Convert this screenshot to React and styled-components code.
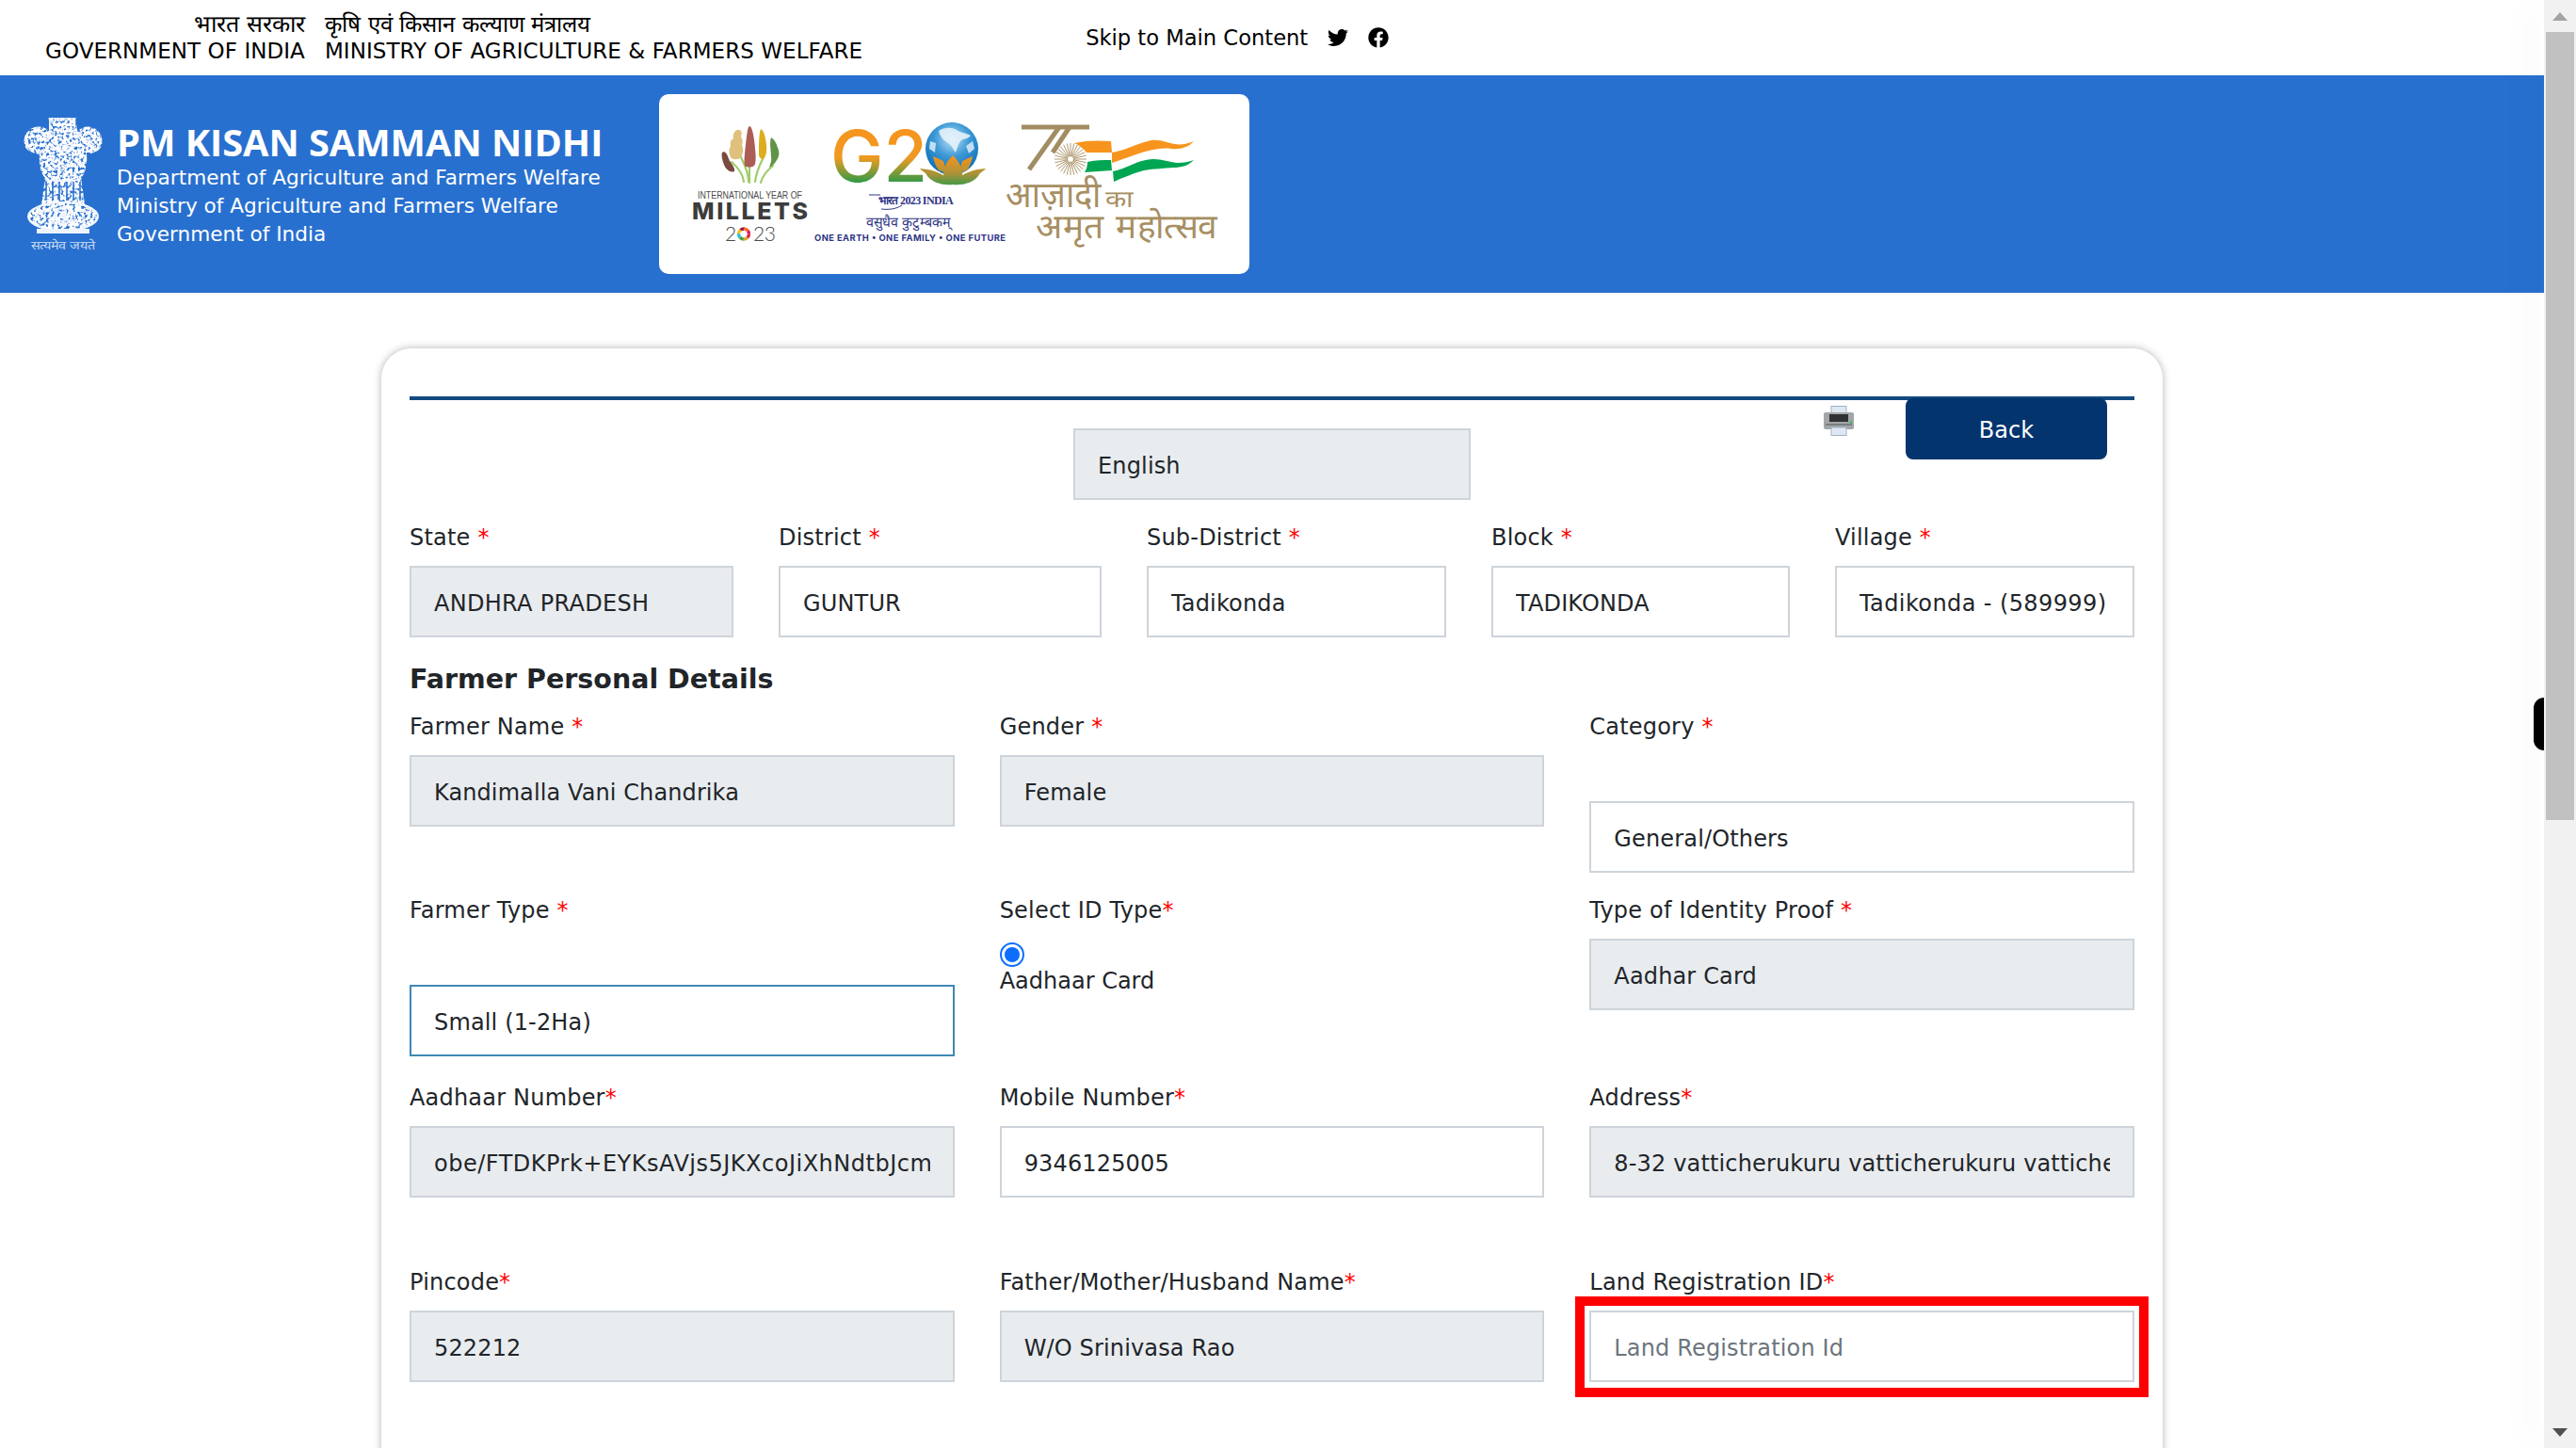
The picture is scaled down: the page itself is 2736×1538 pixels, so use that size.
import React from "react";
import styled, { createGlobalStyle } from "styled-components";
import { FaTwitter, FaFacebook } from "react-icons/fa";

const GlobalStyle = createGlobalStyle`
  html, body { margin: 0; padding: 0; background: #fff; overflow: hidden; }
  body { font-family: "DejaVu Sans", Verdana, sans-serif; color: #212529; }
  * { box-sizing: border-box; }
`;

const Page = styled.div`
  display: flex;
  width: 2736px;
  height: 1538px;
  overflow: hidden;
`;

const Main = styled.div`
  position: relative;
  width: 2702px;
  height: 1538px;
  overflow: hidden;
`;

const TopBar = styled.div`
  height: 80px;
  display: flex;
  align-items: center;
  padding-left: 48px;
  color: #000;
  font-size: 23px;
`;

const GovCol = styled.div`
  display: flex;
  flex-direction: column;
  align-items: ${(p) => (p.$right ? "flex-end" : "flex-start")};
  line-height: 28px;
  margin-right: 21px;
  white-space: nowrap;
  letter-spacing: 0.06px;
`;

const Hindi = styled.span`
  font-size: ${(p) => p.$size}px;
  font-weight: 400;
  letter-spacing: 0;
`;

const SkipRow = styled.div`
  display: flex;
  align-items: center;
  margin-left: 216px;
  gap: 21px;
  font-size: 22.6px;
  svg { font-size: 22px; color: #000; }
`;

const Banner = styled.div`
  height: 231px;
  background: #2870cf;
  display: flex;
  align-items: center;
  padding-left: 24px;
`;

const Emblem = styled.svg`
  width: 86px;
  height: 143px;
  flex: none;
  margin: 2px 14px 0 0;
`;

const BannerText = styled.div`
  width: 576px;
  color: #fff;
`;

const Title = styled.div`
  font-family: "Open Sans", sans-serif;
  font-weight: 700;
  font-size: 39.7px;
  line-height: 46px;
`;

const SubTitle = styled.div`
  font-size: 21.6px;
  line-height: 30px;
`;

const LogoCard = styled.div`
  width: 627px;
  height: 191px;
  background: #fff;
  border-radius: 10px;
  svg { display: block; }
`;

const Card = styled.div`
  margin: 59px 0 0 405px;
  width: 1892px;
  height: 1400px;
  padding: 51px 30px 0;
  border-radius: 32px 32px 0 0;
  box-shadow: 0 0 8px rgba(0, 0, 0, 0.3);
`;

const Rule = styled.div`
  height: 4px;
  background: #134a80;
`;

const Toolbar = styled.div`
  display: grid;
  grid-template-columns: 1fr 422px 1fr;
  margin-top: -2px;
`;

const ToolActions = styled.div`
  display: flex;
  justify-content: flex-end;
  align-items: flex-start;
  padding-right: 29px;
  position: relative;
`;

const PrintIcon = styled.svg`
  width: 32px;
  height: 32px;
  margin: 8px 55px 0 0;
`;

const BackButton = styled.button`
  width: 214px;
  height: 65px;
  border: 0;
  border-radius: 8px;
  padding: 3px 0 0;
  background: #03346e;
  color: #fff;
  font: 400 24px "DejaVu Sans", sans-serif;
`;

const LangBox = styled.div`
  margin-top: 32px;
`;

const Row = styled.div`
  display: grid;
  grid-template-columns: ${(p) => p.$cols};
  column-gap: 48px;
  margin-top: ${(p) => p.$top}px;
`;

const Field = styled.div`
  min-width: 0;
  position: relative;
`;

const Label = styled.div`
  font-size: 24px;
  line-height: 36px;
  padding-top: 2px;
  letter-spacing: 0.2px;
  color: #212529;
  margin-bottom: ${(p) => p.$drop || 12}px;
  white-space: nowrap;
`;

const Star = styled.span`
  color: #f00;
`;

const TextBox = styled.input`
  display: block;
  width: 100%;
  height: 76px;
  padding: 3px 24px 0;
  font: 400 24px "DejaVu Sans", sans-serif;
  letter-spacing: ${(p) => p.$track ?? 0.15}px;
  color: #212529;
  outline: 0;
  border-radius: 0;
  border: 2px solid ${(p) => (p.$focus ? "#3f88b6" : "#ced4da")};
  background: ${(p) => (p.$off ? "#e9ecef" : "#fff")};
  &::placeholder { color: #6c757d; opacity: 1; }
`;

const Heading = styled.h3`
  margin: 25px 0 10px;
  font-size: 28.5px;
  line-height: 40px;
  font-weight: 700;
  color: #212529;
`;

const Radio = styled.span`
  display: block;
  width: 26px;
  height: 26px;
  margin-top: 16px;
  border-radius: 50%;
  border: 2px solid #0d6efd;
  padding: 3px;
  &::after {
    content: "";
    display: block;
    width: 100%;
    height: 100%;
    border-radius: 50%;
    background: #0d6efd;
  }
`;

const RadioLabel = styled.div`
  font-size: 24px;
  line-height: 36px;
  margin-top: -3px;
`;

const Callout = styled.div`
  position: absolute;
  left: -15px;
  right: -15px;
  bottom: -16px;
  height: 107px;
  border: 10px solid #f00;
  pointer-events: none;
`;

const SideTab = styled.div`
  position: absolute;
  top: 741px;
  right: 0;
  width: 11px;
  height: 56px;
  background: #000;
  border-radius: 12px 0 0 12px;
`;

const ScrollTrack = styled.div`
  width: 34px;
  height: 1538px;
  background: #f1f1f1;
  box-shadow: -30px 0 30px rgba(0, 0, 0, 0.012);
  display: flex;
  flex-direction: column;
  align-items: center;
  position: relative;
`;

const ScrollArrow = styled.div`
  flex: none;
  height: 34px;
  display: flex;
  align-items: center;
  justify-content: center;
  &::after {
    content: "";
    border-left: 8px solid transparent;
    border-right: 8px solid transparent;
    ${(p) => (p.$down ? "border-top: 9px solid #505050" : "border-bottom: 9px solid #a3a3a3")};
  }
`;

const ScrollThumb = styled.div`
  width: 30px;
  height: 837px;
  background: #c1c1c1;
`;

const Spacer = styled.div`
  flex: 1;
`;

function Field5({ label, value, off, track }) {
  return (
    <Field>
      <Label>{label} <Star>*</Star></Label>
      <TextBox readOnly value={value} $off={off} $track={track} />
    </Field>
  );
}

function NationalEmblem() {
  const gaps = [25, 32, 39, 47, 54, 61];
  return (
    <Emblem viewBox="0 0 86 143">
      <defs>
        <filter id="mottle" x="0" y="0" width="1" height="1">
          <feTurbulence type="fractalNoise" baseFrequency="0.32" numOctaves="2" seed="7" result="noise" />
          <feColorMatrix in="noise" type="matrix" values="0 0 0 0 1  0 0 0 0 1  0 0 0 0 1  0 0 0 5 -1.55" result="spots" />
          <feComposite in="spots" in2="SourceGraphic" operator="in" />
          <feGaussianBlur stdDeviation="0.45" />
        </filter>
        <filter id="soft"><feGaussianBlur stdDeviation="0.55" /></filter>
      </defs>
      <path
        filter="url(#mottle)"
        fill="#fff"
        d="M28 0H56L58 14C64 8 74 8 80 14C86 20 86 30 80 35L68 40C69 50 66 60 62 64L66 92H20L24 64C20 60 17 50 18 40L6 35C0 30 0 20 6 14C12 8 22 8 28 14Z"
      />
      <path filter="url(#mottle)" fill="#fff" d="M43 89C66 89 80 96 80 105C80 114 66 120 43 120C20 120 6 114 6 105C6 96 20 89 43 89Z" />
      <g filter="url(#soft)" fill="none" stroke="#f2f6fd" strokeLinecap="round">
        <path d="M28 1H56M29 1V18M55 1V18" strokeWidth="1.4" />
        <path d="M31 25c4 6 19 6 23 0M33 33c5 3 15 3 20 0" strokeWidth="2" />
        <path d="M7 15C2 22 3 30 9 34M79 15C84 22 83 30 77 34" strokeWidth="1.6" />
        <path d="M24 65c6 3 32 3 38 0" strokeWidth="1.4" />
        <ellipse cx="43" cy="105" rx="37" ry="15" strokeWidth="2" />
        <circle cx="43" cy="104" r="9" strokeWidth="2.2" />
        <circle cx="43" cy="104" r="3.5" fill="#eef4fc" stroke="none" />
        <path d="M14 104c4-5 8-6 13-5M72 104c-4-5-8-6-13-5" strokeWidth="1.6" />
        <rect x="15" y="118" width="56" height="5" fill="#eef4fc" stroke="none" />
      </g>
      <g stroke="#2870cf" strokeWidth="1.6">
        {gaps.map((x) => (
          <path key={x} d={`M${x} 68v20`} />
        ))}
      </g>
      <text x="43" y="140" textAnchor="middle" fontSize="12.5" fill="#c9dcf5" textLength="68" lengthAdjust="spacingAndGlyphs">सत्यमेव जयते</text>
    </Emblem>
  );
}

function Logos() {
  const ringColors = ["#e5243b", "#dda63a", "#4c9f38", "#26bde2", "#fcc30b", "#a21942", "#fd6925", "#dd1367"];
  const spokes = Array.from({ length: 28 }, (_, i) => (i * Math.PI * 2) / 28);
  return (
    <svg width="627" height="191" viewBox="0 0 627 191">
      <defs>
        <linearGradient id="gtwenty" gradientUnits="userSpaceOnUse" x1="0" y1="36" x2="0" y2="94">
          <stop offset="0" stopColor="#f7941d" />
          <stop offset="0.55" stopColor="#ee9a22" />
          <stop offset="1" stopColor="#2f9a48" />
        </linearGradient>
        <linearGradient id="lotus" gradientUnits="userSpaceOnUse" x1="0" y1="66" x2="0" y2="97">
          <stop offset="0" stopColor="#f7941d" />
          <stop offset="0.6" stopColor="#a99238" />
          <stop offset="1" stopColor="#3c9a48" />
        </linearGradient>
        <radialGradient id="globe" cx="0.5" cy="0.32" r="0.65">
          <stop offset="0" stopColor="#bfe3f7" />
          <stop offset="0.5" stopColor="#3f9ad6" />
          <stop offset="1" stopColor="#0d70b6" />
        </radialGradient>
      </defs>

      {/* millets */}
      <g fill="none" stroke="#9fcc6a" strokeWidth="2.2" strokeLinecap="round">
        <path d="M90 93c-1-8-6-15-13-21" />
        <path d="M95 93c0-8-4-18-8-26" />
        <path d="M96 75v19" />
        <path d="M102 93c1-9 5-18 8-24" />
        <path d="M108 94c2-8 8-14 13-18" />
      </g>
      <path d="M67 62c4-3 6 4 8 9 3 4 6 8 5 11-4 2-9-2-11-7-2-5-3-11-2-13z" fill="#7a4a3f" />
      <path d="M83 38c4-1 6 3 4 7 2 3 2 7 1 9 2 4 1 10-1 13-3 3-9 3-11 0-2-4-2-9 0-12-1-4 0-6 3-8-1-4 1-8 4-9z" fill="#e0c07d" />
      <path d="M96 34c3 0 5 12 6 24 1 8 1 16-1 18-3 2-8 2-10 0-1-4 0-14 1-22 1-9 2-20 4-20z" fill="#ab5d56" />
      <path d="M108 37c3 1 5 8 6 17 1 7-1 13-3 15-3 0-5-2-5-5 0-9 0-23 2-27z" fill="#dcae1d" />
      <path d="M119 46c3 2 6 6 7 11 2 4 2 9-1 13-2 4-5 6-8 8 1-4 3-7 2-11 0-7-2-15 0-21z" fill="#5f9345" />
      <text x="41" y="111" fontFamily="Liberation Sans, sans-serif" fontSize="11" fill="#4a4a49" textLength="111" lengthAdjust="spacingAndGlyphs">INTERNATIONAL YEAR OF</text>
      <text x="35" y="133" fontFamily="Inter, sans-serif" fontWeight="800" fontSize="25" fill="#3c3c3b" textLength="123" lengthAdjust="spacing">MILLETS</text>
      <text x="70" y="156" fontFamily="Lato, sans-serif" fontWeight="300" fontSize="21" fill="#4a4a49">2</text>
      <text x="100" y="156" fontFamily="Lato, sans-serif" fontWeight="300" fontSize="21" fill="#4a4a49" textLength="24">23</text>
      {ringColors.map((c, i) => (
        <circle key={c} cx="90" cy="148.5" r="5.5" fill="none" stroke={c} strokeWidth="3.4" strokeDasharray="4.32 30.24" strokeDashoffset={-i * 4.32} />
      ))}

      {/* g20 */}
      <text x="182" y="93" fontFamily="Inter, sans-serif" fontWeight="500" fontSize="75" fill="url(#gtwenty)" textLength="103" lengthAdjust="spacingAndGlyphs">G2</text>
      <circle cx="311" cy="58" r="28" fill="url(#globe)" />
      <path d="M297 39c6-4 14-4 19-1 4 3 10 3 15 6-3 4-7 3-10 5-3 3-4 8-6 13-3-3-4-8-8-10-4-3-8-5-10-13z" fill="#eaf5fb" fillOpacity="0.85" />
      <path d="M326 55l7-5 2 8-6 5zM288 50l6 2-1 10-6-4z" fill="#e6f3fa" fillOpacity="0.8" />
      <path d="M283 84c6 11 20 13 29 12-6-9-17-16-35-17 1 2 4 3 6 5zM341 84c-6 11-20 13-29 12 6-9 17-16 35-17-1 2-4 3-6 5z" fill="url(#lotus)" />
      <path d="M291 66l11 5 4 13-9-3c-3-4-5-10-6-15zM333 66l-11 5-4 13 9-3c3-4 5-10 6-15z" fill="url(#lotus)" />
      <path d="M312 65c7 7 11 15 10 21-1 5-5 9-10 10-5-1-9-5-10-10-1-6 3-14 10-21z" fill="url(#lotus)" />
      <text x="232" y="117" fontFamily="Liberation Serif, serif" fontWeight="700" fontSize="12" fill="#2e3587" textLength="80">भारत 2023 INDIA</text>
      <path d="M223 107h12M236 122c8 1 16 0 22-4" fill="none" stroke="#2e3587" strokeWidth="1" />
      <text x="220" y="141" fontSize="15" fill="#2e3587" textLength="90" lengthAdjust="spacingAndGlyphs">वसुधैव कुटुम्बकम्</text>
      <text x="165" y="156" fontFamily="Inter, sans-serif" fontWeight="700" fontSize="9.4" fill="#2e3587" textLength="203" lengthAdjust="spacing">ONE EARTH • ONE FAMILY • ONE FUTURE</text>

      {/* 75 years */}
      <g fill="none" stroke="#a28d63" strokeWidth="5">
        <path d="M385 35h72" />
        <path d="M425 35l-32 45" />
        <path d="M436 35l-18 27" />
      </g>
      <g stroke="#a78f62" strokeWidth="0.9">
        {spokes.map((a) => (
          <line key={a} x1={437 + Math.cos(a) * 3} y1={69 + Math.sin(a) * 3} x2={437 + Math.cos(a) * 17} y2={69 + Math.sin(a) * 17} />
        ))}
      </g>
      <path d="M441 52c13-3 26-3 39-2l1 12-27 0c-3-4-8-8-13-10z" fill="#f7941d" />
      <path d="M481 62c13-2 23-8 38-12 10-4 22 2 29 3 6 1 13 0 20-3-5 6-14 9-24 8-20-3-43 9-63 15z" fill="#f7941d" />
      <path d="M455 72c9-2 17-2 25-2l1 11-29 2c2-3 3-7 3-11z" fill="#00a651" />
      <path d="M482 82c14-3 23-10 35-12 13-3 22 2 33 3 7 0 13-1 18-3-6 6-13 8-22 8-9 1-20 1-31 3-11 3-23 8-32 12z" fill="#00a651" />
      <text x="368" y="120" fontSize="38" fill="#a78f62" textLength="102" lengthAdjust="spacingAndGlyphs">आज़ादी</text>
      <text x="474" y="120" fontSize="25" fill="#a78f62" textLength="29" lengthAdjust="spacingAndGlyphs">का</text>
      <text x="400" y="153" fontSize="36" fill="#a78f62" textLength="193" lengthAdjust="spacingAndGlyphs">अमृत महोत्सव</text>
    </svg>
  );
}

function Printer() {
  return (
    <PrintIcon viewBox="0 0 32 32">
      <rect x="8" y="0.5" width="16" height="8" fill="#dfe8f2" stroke="#9db2c9" />
      <rect x="0" y="7" width="32" height="18" rx="2" fill="#a3a6a8" />
      <rect x="6" y="9" width="20" height="8" fill="#2f3133" />
      <rect x="2" y="19" width="28" height="2" fill="#7c7f81" />
      <rect x="8" y="23" width="16" height="8.5" fill="#dfe8f2" stroke="#9db2c9" />
      <rect x="28" y="16" width="2" height="3" fill="#4bb35b" />
    </PrintIcon>
  );
}

export default function App() {
  return (
    <Page>
      <GlobalStyle />
      <Main>
        <TopBar>
          <GovCol $right>
            <Hindi $size={25}>भारत सरकार</Hindi>
            <span>GOVERNMENT OF INDIA</span>
          </GovCol>
          <GovCol>
            <Hindi $size={24}>कृषि एवं किसान कल्याण मंत्रालय</Hindi>
            <span>MINISTRY OF AGRICULTURE &amp; FARMERS WELFARE</span>
          </GovCol>
          <SkipRow>
            <span>Skip to Main Content</span>
            <FaTwitter />
            <FaFacebook />
          </SkipRow>
        </TopBar>

        <Banner>
          <NationalEmblem />
          <BannerText>
            <Title>PM KISAN SAMMAN NIDHI</Title>
            <SubTitle>Department of Agriculture and Farmers Welfare</SubTitle>
            <SubTitle>Ministry of Agriculture and Farmers Welfare</SubTitle>
            <SubTitle>Government of India</SubTitle>
          </BannerText>
          <LogoCard>
            <Logos />
          </LogoCard>
        </Banner>

        <Card>
          <Rule />
          <Toolbar>
            <div />
            <LangBox>
              <TextBox readOnly value="English" $off />
            </LangBox>
            <ToolActions>
              <Printer />
              <BackButton>Back</BackButton>
            </ToolActions>
          </Toolbar>

          <Row $cols="344px 343px 318px 317px 1fr" $top={20}>
            <Field5 label="State" value="ANDHRA PRADESH" off track={0.3} />
            <Field5 label="District" value="GUNTUR" />
            <Field5 label="Sub-District" value="Tadikonda" />
            <Field5 label="Block" value="TADIKONDA" />
            <Field5 label="Village" value="Tadikonda - (589999)" track={0.4} />
          </Row>

          <Heading>Farmer Personal Details</Heading>

          <Row $cols="1fr 1fr 1fr" $top={0}>
            <Field5 label="Farmer Name" value="Kandimalla Vani Chandrika" off track={0.1} />
            <Field5 label="Gender" value="Female" off />
            <Field>
              <Label $drop={61}>Category <Star>*</Star></Label>
              <TextBox readOnly value="General/Others" />
            </Field>
          </Row>

          <Row $cols="1fr 1fr 1fr" $top={20}>
            <Field>
              <Label $drop={61}>Farmer Type <Star>*</Star></Label>
              <TextBox readOnly value="Small (1-2Ha)" $focus />
            </Field>
            <Field>
              <Label>Select ID Type<Star>*</Star></Label>
              <Radio />
              <RadioLabel>Aadhaar Card</RadioLabel>
            </Field>
            <Field5 label="Type of Identity Proof" value="Aadhar Card" off />
          </Row>

          <Row $cols="1fr 1fr 1fr" $top={24}>
            <Field>
              <Label>Aadhaar Number<Star>*</Star></Label>
              <TextBox readOnly value="obe/FTDKPrk+EYKsAVjs5JKXcoJiXhNdtbJcm" $off $track={0.5} />
            </Field>
            <Field>
              <Label>Mobile Number<Star>*</Star></Label>
              <TextBox readOnly value="9346125005" />
            </Field>
            <Field>
              <Label>Address<Star>*</Star></Label>
              <TextBox readOnly value="8-32 vatticherukuru vatticherukuru vatticherukuru" $off />
            </Field>
          </Row>

          <Row $cols="1fr 1fr 1fr" $top={70}>
            <Field>
              <Label>Pincode<Star>*</Star></Label>
              <TextBox readOnly value="522212" $off />
            </Field>
            <Field>
              <Label>Father/Mother/Husband Name<Star>*</Star></Label>
              <TextBox readOnly value="W/O Srinivasa Rao" $off />
            </Field>
            <Field>
              <Label>Land Registration ID<Star>*</Star></Label>
              <TextBox placeholder="Land Registration Id" />
              <Callout />
            </Field>
          </Row>
        </Card>
        <SideTab />
      </Main>
      <ScrollTrack>
        <ScrollArrow />
        <ScrollThumb />
        <Spacer />
        <ScrollArrow $down />
      </ScrollTrack>
    </Page>
  );
}
